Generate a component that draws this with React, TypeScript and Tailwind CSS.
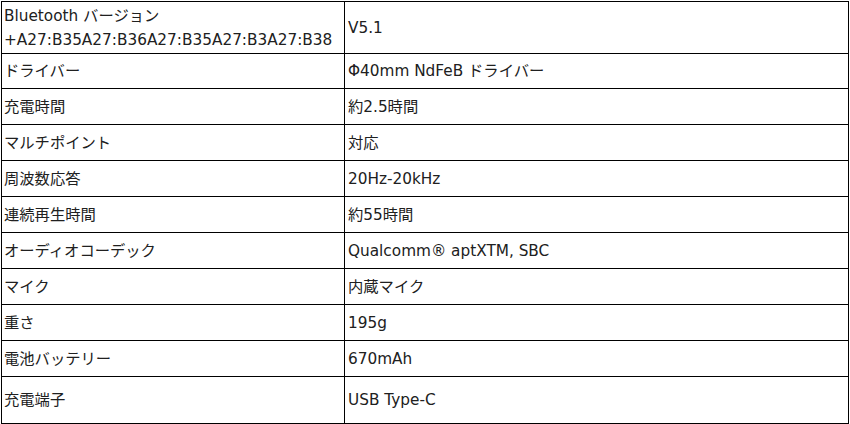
const ROWS: { label: React.ReactNode; value: string; h: number }[] = [
  {
    label: (
      <>
        Bluetooth バージョン
        <br />
        +A27:B35A27:B36A27:B35A27:B3A27:B38
      </>
    ),
    value: 'V5.1',
    h: 52,
  },
  { label: 'ドライバー', value: 'Φ40mm NdFeB ドライバー', h: 35 },
  { label: '充電時間', value: '約2.5時間', h: 36 },
  { label: 'マルチポイント', value: '対応', h: 36 },
  { label: '周波数応答', value: '20Hz-20kHz', h: 36 },
  { label: '連続再生時間', value: '約55時間', h: 36 },
  { label: 'オーディオコーデック', value: 'Qualcomm® aptXTM, SBC', h: 36 },
  { label: 'マイク', value: '内蔵マイク', h: 36 },
  { label: '重さ', value: '195g', h: 36 },
  { label: '電池バッテリー', value: '670mAh', h: 36 },
  { label: '充電端子', value: 'USB Type-C', h: 47 },
]

export default function App() {
  return (
    <div className="h-[424px] w-[850px] bg-white">
      <table
        className="ml-px mt-px w-[848px] table-fixed border-collapse border-b-2 border-black text-[15.3px] leading-[24px] text-[#202020]"
        style={{ fontFamily: '"DejaVu Sans", "Noto Sans CJK JP", sans-serif' }}
      >
        <colgroup>
          <col className="w-[343px]" />
          <col />
        </colgroup>
        <tbody>
          {ROWS.map((row, i) => (
            <tr key={i} style={{ height: row.h }}>
              <td className="border border-black px-[2px] align-middle whitespace-nowrap">{row.label}</td>
              <td className="border border-black px-[3px] align-middle whitespace-nowrap">{row.value}</td>
            </tr>
          ))}
        </tbody>
      </table>
    </div>
  )
}
